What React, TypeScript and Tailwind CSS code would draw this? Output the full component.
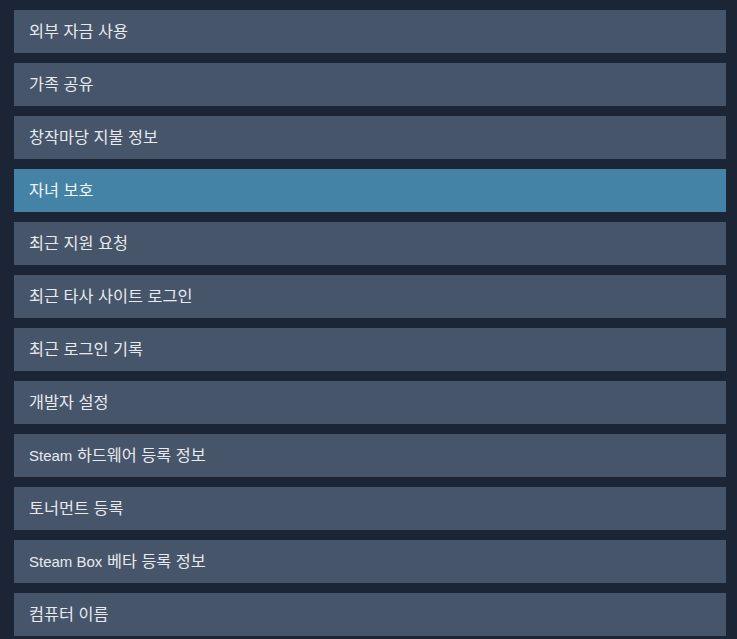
const items = [
  "외부 자금 사용",
  "가족 공유",
  "창작마당 지불 정보",
  "자녀 보호",
  "최근 지원 요청",
  "최근 타사 사이트 로그인",
  "최근 로그인 기록",
  "개발자 설정",
  "Steam 하드웨어 등록 정보",
  "토너먼트 등록",
  "Steam Box 베타 등록 정보",
  "컴퓨터 이름",
];

// Latin words stay at 15px, hangul runs get a little more size to match the wider glyphs
function Label({ text }: { text: string }) {
  const parts = text.split(/([A-Za-z]+(?: [A-Za-z]+)*)/).filter(Boolean);
  return (
    <span className="whitespace-pre">
      {parts.map((p, i) =>
        /[A-Za-z]/.test(p) ? (
          <span key={i} className="text-[15px]">{p}</span>
        ) : (
          <span key={i} className="text-[16.3px]">{p}</span>
        )
      )}
    </span>
  );
}

export default function App() {
  return (
    <div
      className="h-[639px] w-[737px] overflow-hidden bg-[#1b2535] pl-[14px] pr-[11px] pt-[10px]"
      style={{ fontFamily: '"Liberation Sans", Arial, "Noto Sans CJK KR", sans-serif' }}
    >
      <ul className="flex flex-col gap-[10px]">
        {items.map((label) => (
          <li key={label}>
            <a
              href="#"
              className={
                label === "자녀 보호"
                  ? "flex h-[43px] items-center bg-[#4482a6] px-[15px] leading-none text-[#f0f4f7]"
                  : "flex h-[43px] items-center bg-[#46556a] px-[15px] leading-none text-[#e6eaee]"
              }
            >
              <Label text={label} />
            </a>
          </li>
        ))}
      </ul>
    </div>
  );
}
